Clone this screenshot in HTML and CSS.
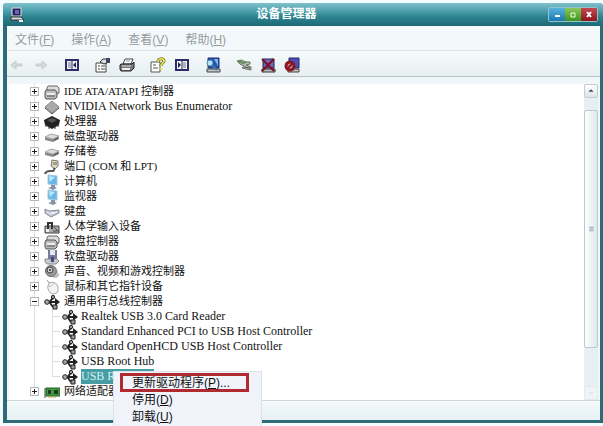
FILE: index.html
```html
<!DOCTYPE html>
<html lang="zh-CN">
<head>
  <meta charset="UTF-8" />
  <meta name="viewport" content="width=device-width, initial-scale=1.0"/>
  <title>设备管理器</title>
  <link rel="stylesheet" href="styles.css">
</head>
<body>
  <!-- icon shapes shared by the toolbar and the tree -->
  <svg class="defs" width="0" height="0" aria-hidden="true">
    <symbol id="usb" viewBox="0 0 16 16">
      <path d="M3 8h10M5 8c2 0 2-4 5-4M5 8c2 0 2 5 5 5" fill="none" stroke="#222" stroke-width="2"/>
      <path d="M11 4l5 4-5 4z" fill="#222"/>
      <circle cx="3" cy="8" r="2.3" fill="#aaa" stroke="#222"/>
      <circle cx="9" cy="3" r="1.7" fill="#999" stroke="#222"/>
      <path d="M9 11h4v4H9z" fill="#999" stroke="#222"/>
    </symbol>
    <symbol id="controller" viewBox="0 0 16 16">
      <path d="M4 2h9l2 2v5l-2 1H4L3 8V4z" fill="#ddd" stroke="#666"/>
      <path d="M2 6h9l2 2v5l-2 2H2l-1-2V8z" fill="#bbb" stroke="#555"/>
      <path d="M3 9h8v2H3z" fill="#eee"/>
      <path d="M3 12h8" stroke="#555"/>
    </symbol>
    <symbol id="diamond" viewBox="0 0 16 16">
      <path d="M8 2l7 6-7 6-7-6z" fill="#aaa" stroke="#888"/>
      <path d="M1 9l7 6 7-6" fill="none" stroke="#555"/>
    </symbol>
    <symbol id="cpu" viewBox="0 0 16 16">
      <path d="M8 2l8 4-1 5-7 4-7-4-1-5z" fill="#222"/>
      <path d="M8 4l5 2-5 3-5-3z" fill="#555"/>
      <path d="M2 10v3M5 12v3M11 12v3M14 10v3" stroke="#333"/>
    </symbol>
    <symbol id="disk" viewBox="0 0 16 16">
      <path d="M1 8l6-3 8 2v3l-6 3-8-2z" fill="#888"/>
      <path d="M1 8l6-3 8 2-6 3z" fill="#ddd" stroke="#aaa"/>
      <path d="M10 11l4-2" stroke="#444"/>
    </symbol>
    <symbol id="port" viewBox="0 0 16 16">
      <path d="M8 1l6 1v5l-3 3-4-3z" fill="#ddd8b8" stroke="#777"/>
      <path d="M10 3v3M12 3v3" stroke="#666"/>
      <path d="M10 9c1 4-2 3-4 3s-4 0-5 3" fill="none" stroke="#555" stroke-width="2"/>
    </symbol>
    <symbol id="pc" viewBox="0 0 16 16">
      <path d="M4 1l9 1v9l-9-1z" fill="#68b7e8" stroke="#a4c8da"/>
      <path d="M5 2l6 1-5 5z" fill="#bce8fb"/>
      <path d="M7 11h4v2l2 1-4 2-5-2 3-1z" fill="#8992a5"/>
    </symbol>
    <symbol id="keyboard" viewBox="0 0 16 16">
      <path d="M1 5l4 2 10-1v3l-8 4-6-4z" fill="#c5c7d4" stroke="#888b9b"/>
      <path d="M3 8l4 2 6-2M7 8l4 1" fill="none" stroke="#f2f2f7"/>
    </symbol>
    <symbol id="hid" viewBox="0 0 16 16">
      <path d="M1 7h14v7H1z" fill="#aaa" stroke="#444"/>
      <path d="M4 11V4h4v6" fill="none" stroke="#333" stroke-width="2"/>
      <path d="M10 8l5 5M9 12h4" stroke="#444"/>
      <path d="M2 10h3v3H2z" fill="#eee"/>
    </symbol>
    <symbol id="floppy" viewBox="0 0 16 16">
      <path d="M4 1h9v10H4z" fill="#777a9b"/>
      <path d="M6 1h5v5H6z" fill="#e6e6ee"/>
      <path d="M1 10h12l2 2-3 3H3l-2-2z" fill="#c9cad4" stroke="#888"/>
      <path d="M7 8v5h3V8" fill="#444a78"/>
    </symbol>
    <symbol id="sound" viewBox="0 0 16 16">
      <circle cx="7" cy="7" r="5.5" fill="#999" stroke="#666"/>
      <circle cx="6" cy="6" r="3" fill="#ccc" stroke="#444"/>
      <path d="M12 5c2 3 1 6-3 8h4l2-3" fill="#ddd" stroke="#999"/>
      <circle cx="6" cy="6" r="1" fill="#333"/>
    </symbol>
    <symbol id="mouse" viewBox="0 0 16 16">
      <path d="M3 1l3 4" stroke="#999" fill="none"/>
      <ellipse cx="9" cy="9" rx="5" ry="6" transform="rotate(-25 9 9)" fill="#f4f4f4" stroke="#aaa"/>
      <path d="M4 7c3 1 5-1 6-3" fill="none" stroke="#bbb"/>
    </symbol>
    <symbol id="network" viewBox="0 0 16 16">
      <path d="M1 4v10" stroke="#444"/>
      <path d="M2 4h14v8H2z" fill="#3c9b3c" stroke="#285f28"/>
      <path d="M4 6h3v4H4zM10 6h4v4h-4z" fill="#253825"/>
      <path d="M4 13h8" stroke="#b5a642"/>
    </symbol>
    <symbol id="arrow" viewBox="0 0 16 16">
      <path d="M2 8l5-4v3h6v2H7v3z" fill="#d4dadd" stroke="#c5cdd1"/>
    </symbol>
    <symbol id="pane" viewBox="0 0 16 16">
      <path d="M2 3h12v10H2z" fill="#f2f2fa" stroke="#2b2b66" stroke-width="2"/>
      <path d="M8 4v8" stroke="#2b2b66"/>
      <path d="M4 6h3M4 8h3M4 10h3" stroke="#777"/>
      <path d="M12 5v6L9 8z" fill="#222255"/>
    </symbol>
    <symbol id="props" viewBox="0 0 16 16">
      <path d="M1 6h10v9H1z" fill="#fff" stroke="#444"/>
      <path d="M3 9h2M6 9h4M3 12h2M6 12h4" stroke="#444"/>
      <path d="M5 5l3-3h4v4l-3 1z" fill="#ddd" stroke="#333"/>
      <path d="M11 1h4v5h-4z" fill="#3e4664"/>
    </symbol>
    <symbol id="print" viewBox="0 0 16 16">
      <path d="M6 2h8l-2 5H4z" fill="#fff" stroke="#444"/>
      <path d="M2 7h11l2-2v6l-3 3H2l-1-2V8z" fill="#777" stroke="#222"/>
      <path d="M3 9h9" stroke="#ddd"/>
      <path d="M3 12h8" stroke="#eee" stroke-width="2"/>
      <path d="M7 4h4" stroke="#999"/>
    </symbol>
    <symbol id="help" viewBox="0 0 16 16">
      <path d="M1 5h9v10H1z" fill="#fff" stroke="#555"/>
      <path d="M3 8h3M3 11h5" stroke="#555"/>
      <path d="M8 5c0-4 6-4 6-1 0 2-3 2-3 5" fill="none" stroke="#555520" stroke-width="3"/>
      <path d="M8 5c0-4 6-4 6-1 0 2-3 2-3 5M11 11v2" fill="none" stroke="#e6dc50" stroke-width="2"/>
    </symbol>
    <symbol id="scan" viewBox="0 0 16 16">
      <path d="M3 1h11v10H3z" fill="#2853b5" stroke="#222c66"/>
      <path d="M9 2h4v7z" fill="#73bdf0"/>
      <path d="M2 12h13v3H2z" fill="#c5c7d0" stroke="#444"/>
      <circle cx="5" cy="6" r="3" fill="#b8e5f5" stroke="#4585a8"/>
      <path d="M7 8l5 5" stroke="#3c7b9c" stroke-width="2"/>
    </symbol>
    <symbol id="update" viewBox="0 0 16 16">
      <path d="M1 4l5-1 3 2h5v2l-4 1 5 2v3l-5-1-4-1 2-2-4-2z" fill="#b4bab2" stroke="#667264"/>
      <path d="M2 4l5 2 3-1" fill="none" stroke="#5c9258" stroke-width="2"/>
      <path d="M8 10l6 1" stroke="#555"/>
    </symbol>
    <symbol id="remove" viewBox="0 0 16 16">
      <path d="M3 2h11v9H3z" fill="#6f68b8" stroke="#222255"/>
      <path d="M2 12h13v3H2z" fill="#bbb" stroke="#333"/>
      <path d="M2 2l12 12M14 2L2 14" stroke="#7c1022" stroke-width="2"/>
    </symbol>
    <symbol id="disable" viewBox="0 0 16 16">
      <path d="M5 1h10v10H5z" fill="#4b51ba" stroke="#26295f"/>
      <path d="M4 12h11v3H4z" fill="#c9c1bd" stroke="#444"/>
      <circle cx="6" cy="9" r="4" fill="#b99" stroke="#8b1520" stroke-width="3"/>
      <path d="M3 12l6-6" stroke="#8b1520" stroke-width="2"/>
    </symbol>
    <symbol id="app" viewBox="0 0 16 16">
      <path d="M3 1h9v8H3z" fill="#25225f" stroke="#ddd"/>
      <path d="M6 3h4v4H6z" fill="#6966ae"/>
      <path d="M2 10h10l3 3H2z" fill="#ddd" stroke="#333"/>
      <path d="M10 14h4" stroke="#eee" stroke-width="2"/>
    </symbol>
  </svg>

  <div class="window">
    <header class="titlebar">
      <svg class="icon"><use href="#app"/></svg>
      <h1>设备管理器</h1>
      <div class="controls">
        <button class="min" aria-label="最小化"><svg viewBox="0 0 16 13"><path d="M6 8h5" stroke="#fff" stroke-width="2"/></svg></button>
        <button class="max" aria-label="最大化"><svg viewBox="0 0 16 13"><path d="M6 5h4v4H6z" fill="none" stroke="#e8ffd8"/></svg></button>
        <button class="close" aria-label="关闭"><svg viewBox="0 0 16 13"><path d="M6 4l4 5M10 4L6 9" stroke="#fff" stroke-width="2"/></svg></button>
      </div>
    </header>

    <nav class="menubar">
      <button>文件(<u>F</u>)</button>
      <button>操作(<u>A</u>)</button>
      <button>查看(<u>V</u>)</button>
      <button>帮助(<u>H</u>)</button>
    </nav>

    <div class="toolbar">
      <div class="group">
        <button aria-label="后退"><svg class="icon"><use href="#arrow"/></svg></button>
        <button aria-label="前进"><svg class="icon flip"><use href="#arrow"/></svg></button>
      </div>
      <div class="group">
        <button aria-label="显示树"><svg class="icon"><use href="#pane"/></svg></button>
      </div>
      <div class="group">
        <button aria-label="属性"><svg class="icon"><use href="#props"/></svg></button>
        <button aria-label="打印"><svg class="icon"><use href="#print"/></svg></button>
      </div>
      <div class="group">
        <button aria-label="帮助"><svg class="icon"><use href="#help"/></svg></button>
        <button aria-label="操作窗格"><svg class="icon flip"><use href="#pane"/></svg></button>
      </div>
      <div class="group">
        <button aria-label="扫描"><svg class="icon"><use href="#scan"/></svg></button>
      </div>
      <div class="group">
        <button aria-label="更新"><svg class="icon"><use href="#update"/></svg></button>
        <button aria-label="卸载"><svg class="icon"><use href="#remove"/></svg></button>
        <button aria-label="停用"><svg class="icon"><use href="#disable"/></svg></button>
      </div>
    </div>

    <main class="content">
      <ul class="tree">
        <li><div class="row"><button class="toggle" aria-label="展开"></button><svg class="icon"><use href="#controller"/></svg><span>IDE ATA/ATAPI 控制器</span></div></li>
        <li><div class="row"><button class="toggle" aria-label="展开"></button><svg class="icon"><use href="#diamond"/></svg><span class="latin">NVIDIA Network Bus Enumerator</span></div></li>
        <li><div class="row"><button class="toggle" aria-label="展开"></button><svg class="icon"><use href="#cpu"/></svg><span>处理器</span></div></li>
        <li><div class="row"><button class="toggle" aria-label="展开"></button><svg class="icon"><use href="#disk"/></svg><span>磁盘驱动器</span></div></li>
        <li><div class="row"><button class="toggle" aria-label="展开"></button><svg class="icon"><use href="#disk"/></svg><span>存储卷</span></div></li>
        <li><div class="row"><button class="toggle" aria-label="展开"></button><svg class="icon"><use href="#port"/></svg><span>端口 (COM 和 LPT)</span></div></li>
        <li><div class="row"><button class="toggle" aria-label="展开"></button><svg class="icon"><use href="#pc"/></svg><span>计算机</span></div></li>
        <li><div class="row"><button class="toggle" aria-label="展开"></button><svg class="icon"><use href="#pc"/></svg><span>监视器</span></div></li>
        <li><div class="row"><button class="toggle" aria-label="展开"></button><svg class="icon"><use href="#keyboard"/></svg><span>键盘</span></div></li>
        <li><div class="row"><button class="toggle" aria-label="展开"></button><svg class="icon"><use href="#hid"/></svg><span>人体学输入设备</span></div></li>
        <li><div class="row"><button class="toggle" aria-label="展开"></button><svg class="icon"><use href="#controller"/></svg><span>软盘控制器</span></div></li>
        <li><div class="row"><button class="toggle" aria-label="展开"></button><svg class="icon"><use href="#floppy"/></svg><span>软盘驱动器</span></div></li>
        <li><div class="row"><button class="toggle" aria-label="展开"></button><svg class="icon"><use href="#sound"/></svg><span>声音、视频和游戏控制器</span></div></li>
        <li><div class="row"><button class="toggle" aria-label="展开"></button><svg class="icon"><use href="#mouse"/></svg><span>鼠标和其它指针设备</span></div></li>
        <li>
          <div class="row"><button class="toggle open" aria-label="折叠"></button><svg class="icon"><use href="#usb"/></svg><span>通用串行总线控制器</span></div>
          <ul class="branch">
            <li class="row"><svg class="icon"><use href="#usb"/></svg><span class="latin">Realtek USB 3.0 Card Reader</span></li>
            <li class="row"><svg class="icon"><use href="#usb"/></svg><span class="latin">Standard Enhanced PCI to USB Host Controller</span></li>
            <li class="row"><svg class="icon"><use href="#usb"/></svg><span class="latin">Standard OpenHCD USB Host Controller</span></li>
            <li class="row"><svg class="icon"><use href="#usb"/></svg><span class="latin">USB Root Hub</span></li>
            <li class="row selected"><svg class="icon"><use href="#usb"/></svg><span class="latin">USB Root Hub</span>
              <div class="context-menu">
                <button class="marked">更新驱动程序(<u>P</u>)...</button>
                <button>停用(<u>D</u>)</button>
                <button>卸载(<u>U</u>)</button>
              </div>
            </li>
          </ul>
        </li>
        <li><div class="row"><button class="toggle" aria-label="展开"></button><svg class="icon"><use href="#network"/></svg><span>网络适配器</span></div></li>
      </ul>
      <div class="scrollbar">
        <button aria-label="向上"><svg viewBox="0 0 14 14"><path d="M4 8l3-3 3 3z" fill="#445"/></svg></button>
        <div class="thumb"><svg viewBox="0 0 14 14"><path d="M5 5h5M5 7h5M5 9h5" stroke="#8a9aa0"/></svg></div>
        <button class="down" aria-label="向下"><svg viewBox="0 0 14 14"><path d="M4 6l3 3 3-3z" fill="#dde4e7"/></svg></button>
      </div>
    </main>

    <footer class="statusbar"></footer>
  </div>
</body>
</html>
```

FILE: styles.css
```css
* {
  box-sizing: border-box;
}
body {
  margin: 0;
  padding: 3px 0 3px 3px;
  height: 100vh;
  overflow: hidden;
  background: #f3fdff;
  font-family: "Liberation Sans", "Noto Sans CJK SC", sans-serif;
  font-size: 12px;
}
button {
  margin: 0;
  padding: 0;
  border: none;
  background: none;
  font: inherit;
  color: inherit;
}
svg {
  display: block;
}
u {
  text-underline-offset: 1px;
}
.defs {
  position: absolute;
}
.icon {
  width: 16px;
  height: 16px;
  flex: none;
}
.flip {
  transform: scaleX(-1);
}
.window {
  display: flex;
  flex-direction: column;
  height: 100%;
  border: solid #2e6c75;
  border-width: 0 3px 3px 4px;
  border-radius: 4px 4px 0 0;
  background: #f1f7f9;
}

/* title bar */
.titlebar {
  display: flex;
  align-items: center;
  flex: none;
  height: 23px;
  margin: 0 -3px 0 -4px;
  padding: 0 5px 0 6px;
  border-radius: 4px 4px 0 0;
  background: linear-gradient(#7fc0cc, #55a5b2 30%, #2d8390 60%, #1e6976);
}
.titlebar h1 {
  flex: 1;
  margin: 0;
  text-align: center;
  font-size: 12px;
  line-height: 23px;
  color: #fff;
}
.controls {
  display: flex;
  margin-bottom: 1px;
  border: 1px solid #8fc4cf;
  border-radius: 2px;
}
.controls button {
  width: 16px;
  height: 13px;
}
.min {
  background: linear-gradient(#58b4dc, #1b78b0);
}
.max {
  background: linear-gradient(#8dc85c, #3c9520);
}
.close {
  background: linear-gradient(#c4494f, #8e1420);
}

/* menu and toolbar */
.menubar {
  display: flex;
  gap: 17px;
  flex: none;
  height: 25px;
  padding: 0 8px;
  border-bottom: 1px solid #dde5e8;
  background: #f3f9fb;
  color: #969b9d;
}
.toolbar {
  display: flex;
  align-items: center;
  gap: 15px;
  flex: none;
  height: 26px;
  padding: 2px 2px 0;
  border-bottom: 1px solid #b5c5c9;
  background: linear-gradient(#f6fafb, #e7eff1);
}
.group {
  display: flex;
  gap: 8px;
}

/* device tree */
.content {
  display: flex;
  flex: 1;
  min-height: 0;
  margin: 7px 2px 0;
  background: #fff;
}
.tree,
.branch {
  margin: 0;
  padding: 0;
  list-style: none;
}
.tree {
  flex: 1;
  padding-left: 20px;
  font-family: "Liberation Serif", "Noto Sans CJK SC", serif;
  font-size: 11px;
  color: #111;
}
.latin {
  font-size: 12px;
}
.tree > li {
  background: linear-gradient(#ddd, #ddd) 5px 0 / 1px 100% no-repeat;
}
.tree > li:last-child {
  background-size: 1px 7px;
}
.row {
  display: flex;
  align-items: center;
  height: 15px;
  line-height: 15px;
}
.row > span {
  margin-left: 4px;
  white-space: nowrap;
}
.toggle {
  width: 9px;
  height: 9px;
  margin: 0 5px 0 1px;
  border: 1px solid #b5b5b5;
  background:
    linear-gradient(#222, #222) center / 5px 1px no-repeat,
    linear-gradient(#222, #222) center / 1px 5px no-repeat,
    #fff;
}
.toggle.open {
  background:
    linear-gradient(#222, #222) center / 5px 1px no-repeat,
    #fff;
}
.branch {
  margin-left: 23px;
  background: linear-gradient(#ddd, #ddd) 0 0 / 1px 68px no-repeat;
}
.branch .row {
  padding-left: 10px;
  background: linear-gradient(#ddd, #ddd) 0 7px / 8px 1px no-repeat;
}
.branch .row > span {
  margin-left: 3px;
}
.selected {
  position: relative;
}
.selected > span {
  background: #479da3;
  color: #d5f2f3;
}

.context-menu {
  position: absolute;
  top: 2px;
  left: 61px;
  z-index: 1;
  width: 149px;
  padding: 1px 12px 4px 6px;
  border: 1px solid #dbe3e7;
  background: #f0f4fa;
  font-family: "Liberation Sans", "Noto Sans CJK SC", sans-serif;
  font-size: 12px;
}
.context-menu button {
  display: block;
  width: 100%;
  padding-left: 12px;
  line-height: 17px;
  text-align: left;
}
.context-menu .marked {
  height: 19px;
  padding-left: 9px;
  border: 3px solid #b02a30;
  line-height: 15px;
}

.scrollbar {
  display: flex;
  flex-direction: column;
  width: 14px;
  background: #e8eff2;
}
.scrollbar button {
  height: 14px;
  border: 1px solid #c2ced2;
  border-radius: 2px;
  background: linear-gradient(#fff, #dce5e8);
}
.scrollbar .down {
  border-color: #e2eaec;
  background: #eef4f5;
}
.thumb {
  display: flex;
  align-items: center;
  flex: 1;
  margin: 12px 0 38px;
  border: 1px solid #bccacf;
  border-radius: 2px;
  background: linear-gradient(90deg, #fdfefe, #dfe8ec);
}
.thumb svg {
  width: 100%;
}
.statusbar {
  flex: none;
  height: 20px;
  border-top: 1px solid #ccd8db;
  background: linear-gradient(#f5fafb, #e6f1f4);
}
```
